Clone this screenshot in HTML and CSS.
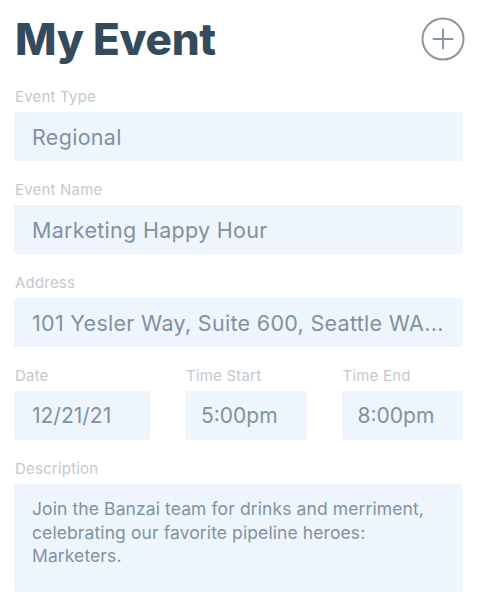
FILE: index.html
```html
<!DOCTYPE html>
<html lang="en">

<head>
  <meta charset="UTF-8">
  <meta name="viewport" content="width=device-width, initial-scale=1.0">
  <title>My Event</title>
  <link rel="stylesheet" href="styles.css">
</head>

<body>
  <div class="event-form">
    <div class="header">
      <h1>My Event</h1>
      <button class="add-btn" aria-label="Add">
        <svg width="44" height="44" viewBox="0 0 44 44">
          <circle cx="22" cy="22" r="20.5" fill="none" stroke="#8b979f" stroke-width="2" />
          <path d="M22 12.5v19M12.5 22h19" stroke="#8b979f" stroke-width="2" stroke-linecap="round" />
        </svg>
      </button>
    </div>

    <div class="field">
      <span class="label">Event Type</span>
      <div class="input">Regional</div>
    </div>

    <div class="field">
      <span class="label">Event Name</span>
      <div class="input">Marketing Happy Hour</div>
    </div>

    <div class="field">
      <span class="label">Address</span>
      <div class="input">101 Yesler Way, Suite 600, Seattle WA...</div>
    </div>

    <div class="row">
      <div class="field date">
        <span class="label">Date</span>
        <div class="input">12/21/21</div>
      </div>
      <div class="field time">
        <span class="label">Time Start</span>
        <div class="input">5:00pm</div>
      </div>
      <div class="field time">
        <span class="label">Time End</span>
        <div class="input">8:00pm</div>
      </div>
    </div>

    <div class="field">
      <span class="label">Description</span>
      <div class="input textarea">Join the Banzai team for drinks and merriment, celebrating our favorite pipeline heroes: Marketers.</div>
    </div>
  </div>
</body>

</html>
```

FILE: styles.css
```css
body {
  margin: 0;
  background-color: #fff;
  font-family: "Inter", "Liberation Sans", sans-serif;
}

.event-form {
  width: 449px;
  padding: 0 0 0 14px;
}

.header {
  display: flex;
  justify-content: space-between;
  align-items: center;
  height: 78px;
}

.header h1 {
  margin: 0 0 0 1px;
  font-size: 44px;
  font-weight: 800;
  color: #344b5e;
  letter-spacing: -0.3px;
}

.add-btn {
  border: 0;
  padding: 0;
  background: none;
  width: 44px;
  height: 44px;
  margin-right: -2px;
}

.field {
  display: flex;
  flex-direction: column;
  margin-bottom: 10px;
}

.label {
  font-size: 15px;
  line-height: 18px;
  color: #c3c9ce;
  margin: 10px 0 6px 1px;
  letter-spacing: 0.2px;
}

.input {
  height: 49px;
  box-sizing: border-box;
  padding: 0 17px 0 18px;
  display: flex;
  align-items: center;
  background-color: #eff5fd;
  border-radius: 3px;
  font-size: 21.5px;
  letter-spacing: 0.3px;
  color: #81929f;
  white-space: nowrap;
  overflow: hidden;
}

.row {
  display: flex;
  gap: 35px;
}

.row .date {
  width: 136px;
}

.row .time {
  flex: 1;
}

.row .input {
  font-size: 21px;
  letter-spacing: 0;
  padding-left: 16px;
}

.row .date .input {
  padding-left: 18px;
}

.input.textarea {
  height: 108px;
  align-items: flex-start;
  padding: 13px 18px 0 18px;
  font-size: 17.5px;
  letter-spacing: 0.1px;
  line-height: 23.5px;
  white-space: normal;
}
```
